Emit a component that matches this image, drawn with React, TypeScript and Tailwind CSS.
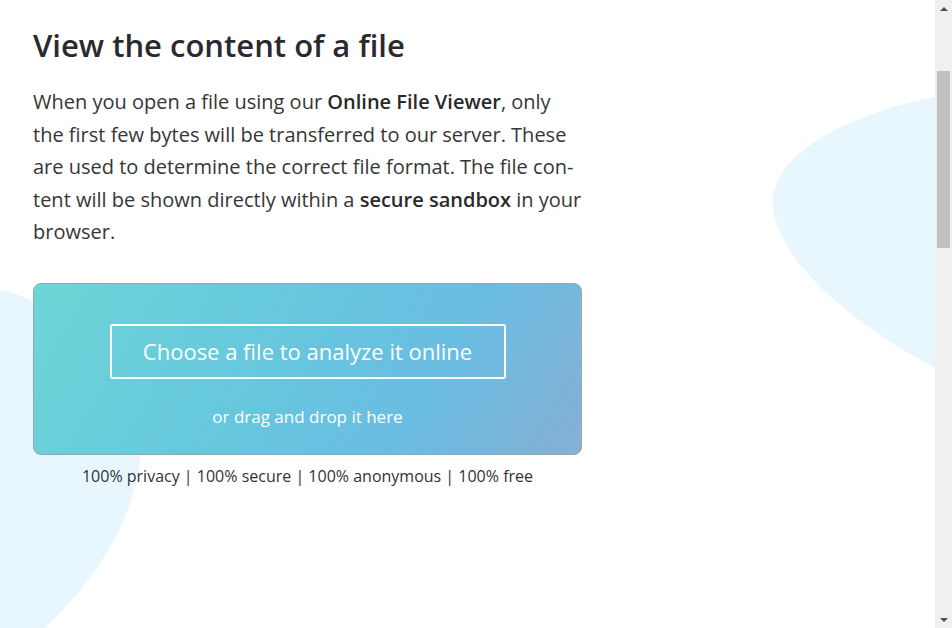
const font = { fontFamily: '"Open Sans", "Noto Sans", sans-serif' };

const Blobs = () => (
  <svg className="absolute inset-0 h-full w-full" viewBox="0 0 935 628" preserveAspectRatio="none">
    <path d="M 940 96 C 860 110, 770 150, 773 205 C 776 262, 860 330, 940 370 Z" fill="#e8f7fd" />
    <path d="M 0 290 C 60 300, 150 380, 140 460 C 132 530, 85 590, 45 628 L 0 628 Z" fill="#e8f7fd" />
  </svg>
);

const Scrollbar = () => (
  <div className="flex h-[628px] w-[17px] shrink-0 flex-col items-center bg-[#f0f0f0]">
    <div className="flex h-[17px] items-center justify-center">
      <div className="h-0 w-0 border-x-[4px] border-b-[4px] border-x-transparent border-b-[#505050]" />
    </div>
    <div className="mt-[54px] h-[177px] w-[13px] bg-[#c1c1c1]" />
    <div className="flex-1" />
    <div className="flex h-[17px] items-center justify-center">
      <div className="h-0 w-0 border-x-[4px] border-t-[4px] border-x-transparent border-t-[#505050]" />
    </div>
  </div>
);

export default function App() {
  return (
    <div className="flex h-[628px] w-[952px] overflow-hidden bg-white" style={font}>
      <div className="relative flex-1">
        <Blobs />
        <div className="relative pl-[33px] pt-[27px]">
          <h1 className="text-[31px] font-semibold leading-[36px] text-[#2a2a2e]">View the content of a file</h1>
          <p className="mt-[23px] w-[620px] text-[20px] leading-[32.5px] text-[#363636]">
            When you open a file using our <b className="font-semibold text-[#2a2a2a]">Online File Viewer</b>, only
            <br />
            the first few bytes will be transferred to our server. These
            <br />
            are used to determine the correct file format. The file con-
            <br />
            tent will be shown directly within a <b className="font-semibold text-[#2a2a2a]">secure sandbox</b> in your
            <br />
            browser.
          </p>
          <div className="mt-[34px] flex h-[172px] w-[549px] flex-col items-center rounded-[8px] border border-[#8fa8b8] bg-[linear-gradient(120deg,#6dd5d6_0%,#66c6de_45%,#6abde2_70%,#86b0d6_100%)] pt-[40px]">
            <button className="flex h-[55px] w-[396px] items-center justify-center rounded-[3px] border-2 border-white text-[22px] text-white">
              Choose a file to analyze it online
            </button>
            <div className="mt-[26px] text-[17px] leading-[24px] text-white">or drag and drop it here</div>
          </div>
          <div className="mt-[9px] w-[549px] text-center text-[16px] leading-[24px] text-[#333]">
            100% privacy | 100% secure | 100% anonymous | 100% free
          </div>
        </div>
      </div>
      <Scrollbar />
    </div>
  );
}
